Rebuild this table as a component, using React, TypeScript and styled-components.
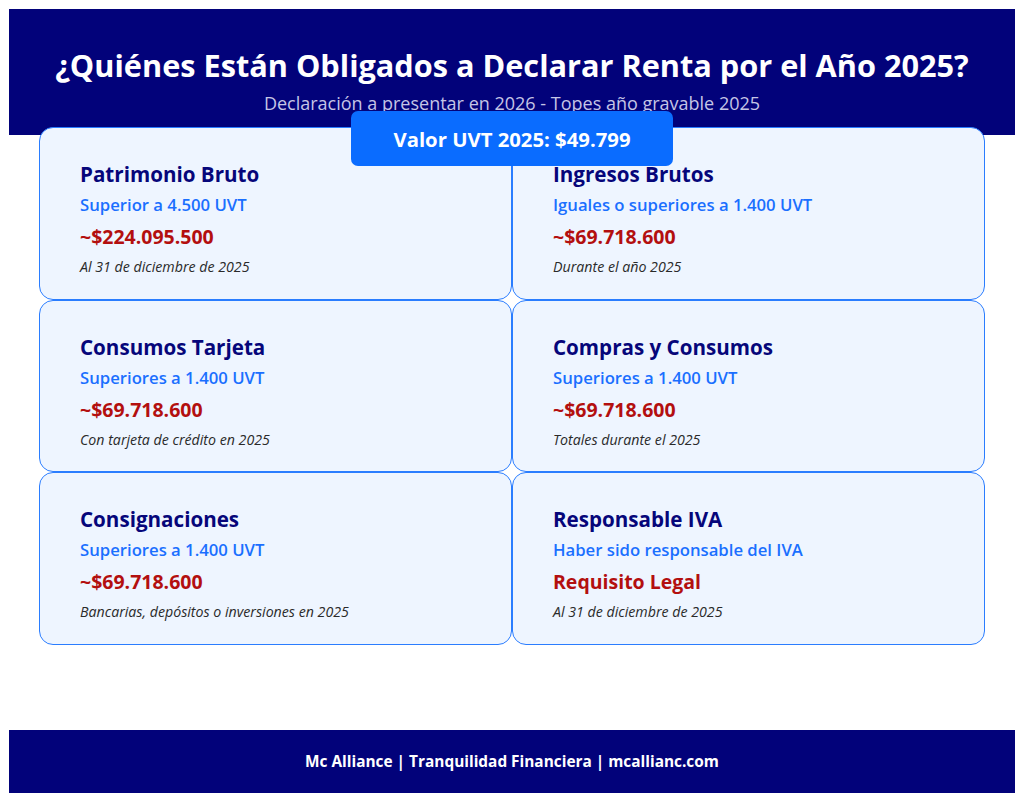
import React from "react";
import styled, { createGlobalStyle } from "styled-components";

const GlobalStyle = createGlobalStyle`
  html, body { margin: 0; padding: 0; background: #ffffff; }
  body { font-family: "Open Sans", "Noto Sans", sans-serif; }
  * { box-sizing: border-box; }
`;

const Page = styled.div`
  padding: 9px;
  width: 1024px;
`;

const Header = styled.header`
  background: #02027a;
  height: 126px;
  display: flex;
  flex-direction: column;
  align-items: center;
  padding-top: 36px;
`;

const Title = styled.h1`
  margin: 0;
  color: #ffffff;
  font-size: 30.7px;
  line-height: 40px;
  font-weight: 700;
  white-space: nowrap;
`;

const Subtitle = styled.p`
  margin: 6px 0 0;
  color: #c5c5e6;
  font-size: 18px;
  line-height: 24px;
  font-weight: 400;
`;

const Main = styled.main`
  position: relative;
  margin: -8px 30px 0;
`;

const Badge = styled.div`
  position: absolute;
  top: -16px;
  left: 50%;
  transform: translateX(-50%);
  width: 322px;
  height: 55px;
  background: #0a6cff;
  border-radius: 7px;
  color: #ffffff;
  font-size: 20.3px;
  font-weight: 700;
  display: flex;
  align-items: center;
  justify-content: center;
  z-index: 2;
`;

const Grid = styled.div`
  display: grid;
  grid-template-columns: 1fr 1fr;
  grid-auto-rows: 172.5px;
`;

const Card = styled.div`
  background: #eef5ff;
  border: 1.6px solid #2a7dff;
  border-radius: 14px;
  padding: 33px 40px 0;
  display: flex;
  flex-direction: column;
`;

const CardTitle = styled.h2`
  margin: 0;
  color: #06067a;
  font-size: 20.6px;
  line-height: 26px;
  font-weight: 700;
`;

const CardSub = styled.div`
  margin-top: 7px;
  color: #1a6fff;
  font-size: 16.7px;
  line-height: 22px;
  font-weight: 600;
`;

const Amount = styled.div`
  margin-top: 9px;
  color: #b30f0f;
  font-size: 19.5px;
  line-height: 24px;
  font-weight: 700;
`;

const Note = styled.div`
  margin-top: 8px;
  color: #2a2a2a;
  font-size: 14.2px;
  line-height: 20px;
  font-style: italic;
`;

const Footer = styled.footer`
  margin-top: 85px;
  height: 63px;
  background: #02027a;
  color: #ffffff;
  font-size: 15.4px;
  font-weight: 700;
  display: flex;
  align-items: center;
  justify-content: center;
`;

const cards = [
  { title: "Patrimonio Bruto", sub: "Superior a 4.500 UVT", amount: "~$224.095.500", note: "Al 31 de diciembre de 2025" },
  { title: "Ingresos Brutos", sub: "Iguales o superiores a 1.400 UVT", amount: "~$69.718.600", note: "Durante el año 2025" },
  { title: "Consumos Tarjeta", sub: "Superiores a 1.400 UVT", amount: "~$69.718.600", note: "Con tarjeta de crédito en 2025" },
  { title: "Compras y Consumos", sub: "Superiores a 1.400 UVT", amount: "~$69.718.600", note: "Totales durante el 2025" },
  { title: "Consignaciones", sub: "Superiores a 1.400 UVT", amount: "~$69.718.600", note: "Bancarias, depósitos o inversiones en 2025" },
  { title: "Responsable IVA", sub: "Haber sido responsable del IVA", amount: "Requisito Legal", note: "Al 31 de diciembre de 2025" },
];

export default function App() {
  return (
    <>
      <GlobalStyle />
      <Page>
        <Header>
          <Title>¿Quiénes Están Obligados a Declarar Renta por el Año 2025?</Title>
          <Subtitle>Declaración a presentar en 2026 - Topes año gravable 2025</Subtitle>
        </Header>
        <Main>
          <Badge>Valor UVT 2025: $49.799</Badge>
          <Grid>
            {cards.map((c) => (
              <Card key={c.title}>
                <CardTitle>{c.title}</CardTitle>
                <CardSub>{c.sub}</CardSub>
                <Amount>{c.amount}</Amount>
                <Note>{c.note}</Note>
              </Card>
            ))}
          </Grid>
        </Main>
        <Footer>Mc Alliance | Tranquilidad Financiera | mcallianc.com</Footer>
      </Page>
    </>
  );
}
